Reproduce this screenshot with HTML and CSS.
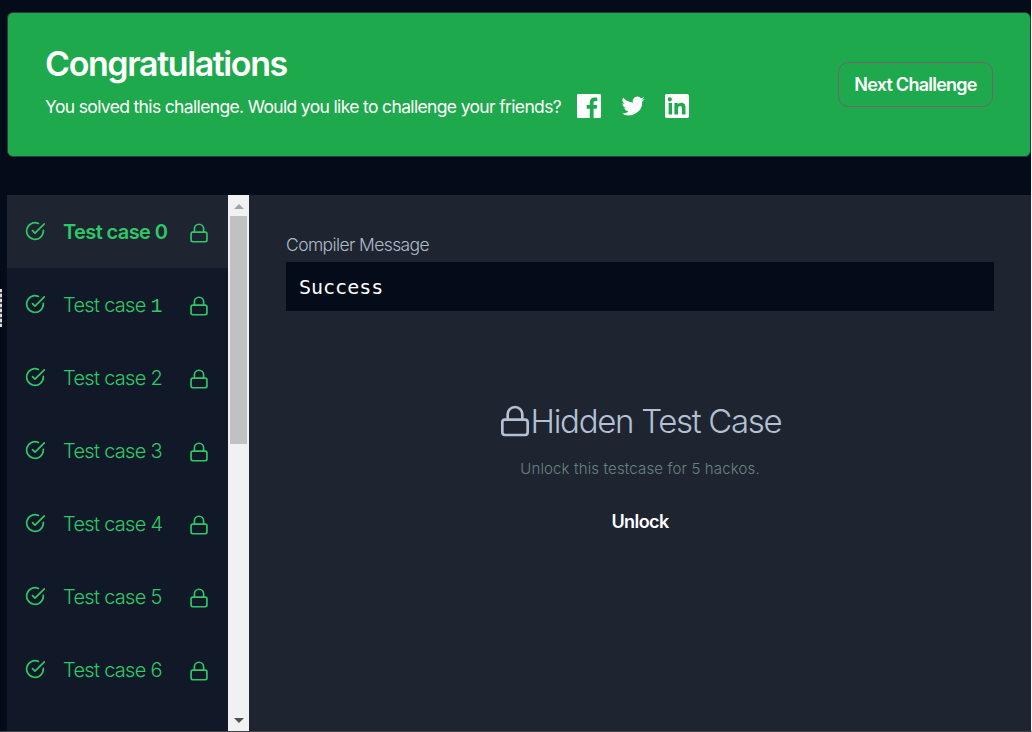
FILE: index.html
```html
<!DOCTYPE html>
<html lang="en">
<head>
<meta charset="utf-8">
<title>Challenge results</title>
<link rel="stylesheet" href="styles.css">
</head>
<body>
<svg width="0" height="0" class="defs">
  <symbol id="check" viewBox="0 0 24 24"><path d="M22 11.100V12a10 10 0 1 1-5.900-9.100"/><path d="M23.200 3.500 12 14.500l-3-3"/></symbol>
  <symbol id="lock" viewBox="0 0 24 24"><rect x="2.500" y="11" width="19" height="11.500" rx="2"/><path d="M6.500 11V7a5.500 5.500 0 0 1 11 0v4"/></symbol>
</svg>
<main class="page">
  <section class="banner">
    <div>
      <h1 class="title"><span>Congratulations</span></h1>
      <div class="share">
        <p class="share-text">You solved this challenge. Would you like to challenge your friends?</p>
        <svg class="social" viewBox="0 0 24 24"><path d="M22.700 0H1.300C.6 0 0 .6 0 1.300v21.400c0 .7.6 1.300 1.300 1.300h11.500v-9.300H9.700v-3.600h3.100V8.400c0-3.100 1.900-4.800 4.700-4.800 1.300 0 2.500.1 2.800.1V7h-1.900c-1.500 0-1.800.7-1.800 1.800v2.300h3.600l-.5 3.600h-3.100V24h6.100c.7 0 1.300-.6 1.300-1.300V1.300C24 .6 23.400 0 22.700 0z"/></svg>
        <svg class="social" viewBox="0 0 24 24"><path d="M23.600 4.900c-.8.4-1.800.7-2.700.8 1-.6 1.700-1.500 2.100-2.600-.9.5-1.900.9-3 1.100a4.700 4.700 0 0 0-8.100 4.300C8 8.300 4.500 6.400 2.200 3.600a4.700 4.700 0 0 0 1.500 6.300c-.8 0-1.500-.2-2.200-.6v.1c0 2.300 1.600 4.200 3.800 4.600-.7.2-1.400.2-2.100.1.600 1.900 2.300 3.200 4.400 3.300A9.500 9.500 0 0 1 .6 19.300a13.400 13.400 0 0 0 20.600-11.900c.9-.7 1.700-1.500 2.400-2.500z"/></svg>
        <svg class="social" viewBox="0 0 24 24"><path fill-rule="evenodd" d="M22.200 0H1.800C.8 0 0 .8 0 1.700v20.600c0 .9.8 1.700 1.800 1.700h20.400c1 0 1.800-.8 1.800-1.700V1.700C24 .8 23.200 0 22.200 0zM7.100 20.500H3.600V9h3.500v11.500zM5.300 7.400a2.100 2.100 0 1 1 0-4.100 2.100 2.100 0 0 1 0 4.100zM20.500 20.500h-3.600v-5.600c0-1.300 0-3-1.800-3s-2.100 1.400-2.100 2.900v5.700H9.400V9h3.400v1.600c.5-.9 1.600-1.900 3.400-1.900 3.600 0 4.300 2.400 4.300 5.500v6.300z"/></svg>
      </div>
    </div>
    <button class="next">Next Challenge</button>
  </section>
  <section class="results">
    <ul class="cases">
      <li class="case active"><svg class="check"><use href="#check"/></svg><span class="name">Test case 0</span><svg class="lock"><use href="#lock"/></svg></li>
      <li class="case"><svg class="check"><use href="#check"/></svg><span class="name">Test case <span class="one">1</span></span><svg class="lock"><use href="#lock"/></svg></li>
      <li class="case"><svg class="check"><use href="#check"/></svg><span class="name">Test case 2</span><svg class="lock"><use href="#lock"/></svg></li>
      <li class="case"><svg class="check"><use href="#check"/></svg><span class="name">Test case 3</span><svg class="lock"><use href="#lock"/></svg></li>
      <li class="case"><svg class="check"><use href="#check"/></svg><span class="name">Test case 4</span><svg class="lock"><use href="#lock"/></svg></li>
      <li class="case"><svg class="check"><use href="#check"/></svg><span class="name">Test case 5</span><svg class="lock"><use href="#lock"/></svg></li>
      <li class="case"><svg class="check"><use href="#check"/></svg><span class="name">Test case 6</span><svg class="lock"><use href="#lock"/></svg></li>
    </ul>
    <div class="scrollbar"><i class="up"></i><i class="thumb"></i><i class="down"></i></div>
    <div class="detail">
      <div class="label"><span>Compiler Message</span></div>
      <pre class="output">Success</pre>
      <div class="hidden-case">
        <h2 class="hidden-title"><svg class="big-lock"><use href="#lock"/></svg><span>Hidden Test Case</span></h2>
        <p class="hint"><span>Unlock this testcase for 5 hackos.</span></p>
        <button class="unlock">Unlock</button>
      </div>
    </div>
  </section>
  <div class="resize-handle"></div>
</main>
</body>
</html>
```
FILE: styles.css
```css
* { box-sizing: border-box; margin: 0; }
body { background: #040b19; font-family: Inter, "Liberation Sans", sans-serif; overflow: hidden; }
button { background: none; border: 0; font-family: inherit; color: #fff; padding: 0; }
.defs { display: block; height: 0; }
.page { position: relative; display: flex; flex-direction: column; gap: 38px; height: 732px; padding: 12px 0 0 7px; border-bottom: 1px solid #414347; border-right: 1px solid #f4f4f4; }
.banner { display: flex; justify-content: space-between; height: 145px; flex: none; padding: 30px 37px 0; background: #1ea94c; border: 1px solid #293b3b; border-radius: 6px; color: #fff; }
.title { font-size: 34px; line-height: 42px; font-weight: 600; letter-spacing: -1.4px; }
.share { display: flex; align-items: center; margin-top: 9px; height: 24px; }
.share-text { width: 532px; padding-top: 2px; font-size: 17.500px; line-height: 24px; letter-spacing: -.65px; white-space: nowrap; }
.social { width: 24px; height: 24px; margin-right: 20px; fill: #fff; }
.next { width: 155px; height: 45px; margin-top: 19px; border: 1px solid #70656e; border-radius: 10px; font-size: 18px; font-weight: 600; letter-spacing: -.75px; white-space: nowrap; }
.results { display: flex; flex: 1; min-height: 0; }
.cases { width: 221px; padding: 0; list-style: none; background: #111827; overflow: hidden; }
.case { display: flex; align-items: center; height: 73px; padding-left: 18px; color: #2ec866; font-size: 20px; font-weight: 300; letter-spacing: -.7px; }
.active { background: #1e2531; font-weight: 600; letter-spacing: -.6px; }
.case svg { flex: none; fill: none; stroke: currentColor; stroke-width: 2; stroke-linecap: round; stroke-linejoin: round; }
.check { width: 20px; height: 20px; margin-bottom: 2px; }
.name { width: 127px; height: 24px; margin: 1px 0 0 18px; line-height: 24px; white-space: nowrap; }
.one { font-family: "Liberation Mono", monospace; line-height: 1; }
.lock { width: 20px; height: 20px; margin-top: 2px; margin-left: -1px; }
.scrollbar { display: flex; flex-direction: column; align-items: center; width: 21px; background: #f1f1f1; }
.up { border: 5px solid transparent; border-top: 0; border-bottom-color: #a3a3a3; margin: 9px 0 7px; }
.thumb { width: 17px; height: 228px; background: #c1c1c1; }
.down { border: 5px solid transparent; border-bottom: 0; border-top-color: #505050; margin: auto 0 8px; }
.detail { flex: 1; padding: 38px 37px 0; background: #1e2531; }
.label { height: 29px; color: #b0bbcb; font-size: 17.500px; font-weight: 300; line-height: 24px; letter-spacing: -.6px; }
.output { height: 49px; padding: 0 13px; background: #040b19; color: #fff; font: 20px/51px "DejaVu Sans Mono", monospace; }
.hidden-case { display: flex; flex-direction: column; align-items: center; padding-top: 88px; }
.hidden-title { display: flex; align-items: center; height: 44px; color: #b4c0d3; font-size: 33px; font-weight: 300; letter-spacing: -1.300px; white-space: nowrap; }
.big-lock { width: 32px; height: 32px; fill: none; stroke: currentColor; stroke-width: 2; }
.hint { margin-top: 14px; color: #68847f; font-size: 15px; font-weight: 300; line-height: 24px; letter-spacing: .15px; }
.unlock { margin-top: 28px; font-size: 18px; line-height: 26px; font-weight: 600; letter-spacing: -.6px; }
.resize-handle { position: absolute; left: 0; top: 289px; width: 2px; height: 38px; background: repeating-linear-gradient(#ddd 0 3px, #555 3px 5px); }
```
